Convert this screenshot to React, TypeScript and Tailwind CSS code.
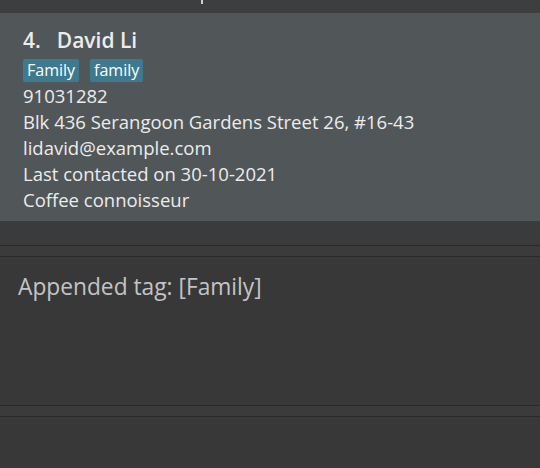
import React from 'react';

const font = { fontFamily: '"Open Sans", "Noto Sans", sans-serif' };

function Divider() {
  return (
    <div className="h-[12px] shrink-0 border-y border-[#2a2a2a] bg-[#3b3b3b]" />
  );
}

export default function App() {
  return (
    <div className="flex h-[468px] w-[540px] flex-col overflow-hidden bg-[#383838]" style={font}>
      <div className="relative h-[13px] shrink-0 bg-[#3d3e40]">
        <div className="absolute left-[201px] top-0 h-[4px] w-[2px] bg-[#cfcfcf]" />
      </div>

      <div className="h-[208px] shrink-0 bg-[#515658] px-[23px] pt-[14px] text-[#ececec]">
        <div className="flex items-baseline gap-[16px] text-[21px] font-semibold leading-[26px]">
          <span>4.</span>
          <span>David Li</span>
        </div>
        <div className="mt-[6px] flex gap-[11px]">
          <span className="rounded-[2px] bg-[#3e7a8f] px-[4px] text-[16px] leading-[23px] text-white">Family</span>
          <span className="rounded-[2px] bg-[#3e7a8f] px-[4px] text-[16px] leading-[23px] text-white">family</span>
        </div>
        <div className="mt-[1px] text-[18.5px] leading-[26px]">
          <div>91031282</div>
          <div>Blk 436 Serangoon Gardens Street 26, #16-43</div>
          <div>lidavid@example.com</div>
          <div>Last contacted on 30-10-2021</div>
          <div>Coffee connoisseur</div>
        </div>
      </div>

      <div className="h-[24px] shrink-0 bg-[#3a3b3c]" />
      <Divider />

      <div className="h-[148px] shrink-0 bg-[#383838] px-[18px] pt-[15px]">
        <div className="text-[22.75px] leading-[30px] text-[#c4c4c4]">Appended tag: [Family]</div>
      </div>

      <Divider />
      <div className="flex-1 bg-[#383838]" />
    </div>
  );
}
